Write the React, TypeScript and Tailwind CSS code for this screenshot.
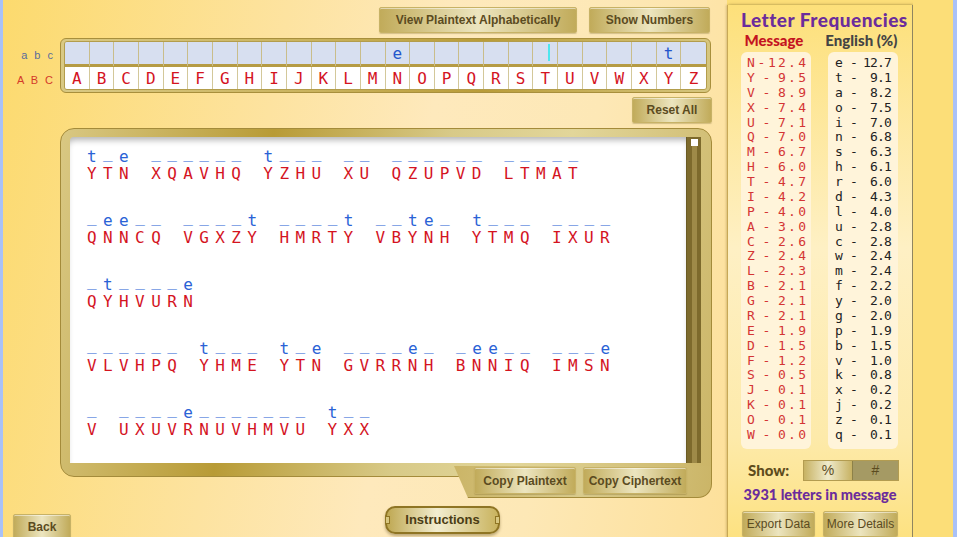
import React from 'react';

const letters = 'ABCDEFGHIJKLMNOPQRSTUVWXYZ'.split('');
const plainMap: Record<string, string> = { N: 'e', Y: 't' };

const lines: [string, string][] = [
  ['t_e ______ t___ __ ______ _____', 'YTN XQAVHQ YZHU XU QZUPVD LTMAT'],
  ['_ee__ ____t ____t __te_ t___ ____', 'QNNCQ VGXZY HMRTY VBYNH YTMQ IXUR'],
  ['_t____e', 'QYHVURN'],
  ['______ t___ t_e ____e_ _ee__ ___e', 'VLVHPQ YHME YTN GVRRNH BNNIQ IMSN'],
  ['_ ____e_______ t__', 'V UXUVRNUVHMVU YXX'],
];

const messageFreq: [string, string][] = [
  ['N', '12.4'], ['Y', '9.5'], ['V', '8.9'], ['X', '7.4'], ['U', '7.1'], ['Q', '7.0'],
  ['M', '6.7'], ['H', '6.0'], ['T', '4.7'], ['I', '4.2'], ['P', '4.0'], ['A', '3.0'],
  ['C', '2.6'], ['Z', '2.4'], ['L', '2.3'], ['B', '2.1'], ['G', '2.1'], ['R', '2.1'],
  ['E', '1.9'], ['D', '1.5'], ['F', '1.2'], ['S', '0.5'], ['J', '0.1'], ['K', '0.1'],
  ['O', '0.1'], ['W', '0.0'],
];

const englishFreq: [string, string][] = [
  ['e', '12.7'], ['t', '9.1'], ['a', '8.2'], ['o', '7.5'], ['i', '7.0'], ['n', '6.8'],
  ['s', '6.3'], ['h', '6.1'], ['r', '6.0'], ['d', '4.3'], ['l', '4.0'], ['u', '2.8'],
  ['c', '2.8'], ['w', '2.4'], ['m', '2.4'], ['f', '2.2'], ['y', '2.0'], ['g', '2.0'],
  ['p', '1.9'], ['b', '1.5'], ['v', '1.0'], ['k', '0.8'], ['x', '0.2'], ['j', '0.2'],
  ['z', '0.1'], ['q', '0.1'],
];

const goldBtn =
  'flex items-center justify-center border border-[#c7b266] rounded-[2px] bg-[linear-gradient(90deg,#c1ab5a_0%,#ece5bf_50%,#c1ab5a_100%)] shadow-[inset_0_1px_0_rgba(255,255,255,0.5),0_1px_1px_rgba(120,100,40,0.3)] text-[#5b4b1f] text-[12px] font-bold font-["Liberation_Sans",Arial,sans-serif]';

const mono = 'font-["DejaVu_Sans_Mono",monospace]';

const AlphabetBar = () => (
  <div className="flex items-start mt-[5px]">
    <div className='w-[57px] pr-[5px] pt-[6px] text-right text-[11px] leading-[22px] font-["Liberation_Sans",Arial,sans-serif]'>
      <div className="text-[#5a6c9c] tracking-[2px]">a b c</div>
      <div className="text-[#d43a2a] tracking-[2px] mt-[3px]">A B C</div>
    </div>
    <div className="w-[651px] h-[55px] rounded-[6px] border border-[#a88f3c] bg-[linear-gradient(90deg,#d9c984_0%,#c9b25c_40%,#b99c38_65%,#d6c67e_100%)] pt-[2px] pb-[4px] pl-[3px] pr-[3px]">
      <div className="rounded-[3px] overflow-hidden border border-[#b39d4c]">
        <div className="grid grid-cols-[repeat(26,1fr)] h-[22px] bg-[#d7dff0]">
          {letters.map((l, i) => (
            <div
              key={l}
              className={`relative flex items-center justify-center text-[16px] text-[#2456cc] ${mono} ${i < 25 ? 'border-r border-[#c9bd8a]' : ''}`}
            >
              {plainMap[l] ?? ''}
              {l === 'T' && <div className="absolute left-[15px] top-[2px] w-[2px] h-[17px] bg-[#4ee6ee]" />}
            </div>
          ))}
        </div>
        <div className="h-[3px] bg-[#b59b44]" />
        <div className="grid grid-cols-[repeat(26,1fr)] h-[22px] bg-white">
          {letters.map((l, i) => (
            <div
              key={l}
              className={`flex items-center justify-center text-[16px] text-[#d4141f] ${mono} ${i < 25 ? 'border-r border-[#d3c89a]' : ''}`}
            >
              {l}
            </div>
          ))}
        </div>
      </div>
    </div>
  </div>
);

const PlainLine = ({ text }: { text: string }) => (
  <div className="text-[#2a62d6]">
    {text.split('').map((c, i) =>
      c === '_' ? (
        <span key={i} className="relative -top-[4px]">_</span>
      ) : (
        <span key={i}>{c}</span>
      ),
    )}
  </div>
);

const MessageFrame = () => (
  <div className="ml-[57px] w-[652px] mt-[5px]">
    <div className="h-[349px] rounded-[14px] rounded-br-none border border-[#a48b3a] bg-[linear-gradient(100deg,#d9c883_0%,#b89b36_30%,#d8ca88_55%,#e2d69a_72%,#cbb567_100%)] pt-[8px] pl-[9px] pr-[10px] pb-[13px] flex">
      <div className="flex-1 bg-white rounded-tl-[4px] shadow-[inset_0_6px_6px_-3px_rgba(0,0,0,0.3)] pt-[11px] pl-[17px]">
        {lines.map(([plain, cipher], i) => (
          <div key={i} className={`${mono} text-[16px] leading-[17px] tracking-[6.4px] whitespace-pre ${i > 0 ? 'mt-[30px]' : ''}`}>
            <PlainLine text={plain} />
            <div className="text-[#d4141f]">{cipher}</div>
          </div>
        ))}
      </div>
      <div className="w-[15px] bg-[#7d6a2c] border-l border-[#6a5a22] flex justify-center pt-[2px]">
        <div className="w-[5px] bg-[#9e8a48] flex flex-col items-center">
          <div className="w-[7px] h-[7px] bg-white" />
        </div>
      </div>
    </div>
    <div className="flex justify-end">
      <div className="-mt-[11px] w-[258px] h-[32px] pl-[20px] pr-[10px] pt-[1px] rounded-br-[14px] border-r border-b border-[#a48b3a] bg-[linear-gradient(100deg,#cbb567_0%,#d9cb8c_50%,#cbb567_100%)] [clip-path:polygon(0_0,100%_0,100%_100%,14px_100%)] flex gap-[7px] items-start">
        <button className={`${goldBtn} w-[102px] h-[27px]`}>Copy Plaintext</button>
        <button className={`${goldBtn} w-[104px] h-[27px]`}>Copy Ciphertext</button>
      </div>
    </div>
  </div>
);

const FreqPanel = () => (
  <div className="w-[186px] h-[540px] mt-[5px] border-l border-[#c8a856] border-r border-r-[#8f8560] shadow-[2px_0_3px_rgba(90,80,40,0.45),-1px_0_2px_rgba(150,120,40,0.3)] bg-[linear-gradient(180deg,#fde07a_0%,#fef0c4_45%,#fdeaaa_80%,#fde17e_100%)] pt-[4px] px-[13px]">
    <div className='text-center text-[19px] leading-[22px] font-black text-[#6b2c9c] tracking-[0.5px] font-["Lato",sans-serif] whitespace-nowrap'>
      Letter Frequencies
    </div>
    <div className='flex gap-[17px] mt-[1px] text-[15px] leading-[16px] font-black font-["Lato",sans-serif]'>
      <div className="w-[70px] text-center text-[#c4141f]">Message</div>
      <div className="w-[80px] text-center text-[#444] whitespace-nowrap">English (%)</div>
    </div>
    <div className={`flex gap-[17px] mt-[4px] ${mono} text-[13px] leading-[14.88px]`}>
      <div className="w-[70px] h-[397px] rounded-[6px] bg-[#fff4da] pt-[4px] pl-[6px] pr-[5px]">
        {messageFreq.map(([l, v]) => (
          <div key={l} className="flex justify-between text-[#d43434]">
            <span>{l}</span>
            <span>-</span>
            <span className="tracking-[2.2px] -mr-[2.2px]">{v}</span>
          </div>
        ))}
      </div>
      <div className="w-[70px] h-[397px] rounded-[6px] bg-[#fff4da] pt-[4px] pl-[7px] pr-[7px]">
        {englishFreq.map(([l, v]) => (
          <div key={l} className="flex text-[#222]">
            <span className="w-[15px]">{l}</span>
            <span>-</span>
            <span className="flex-1 text-right tracking-[-0.8px]">{v}</span>
          </div>
        ))}
      </div>
    </div>
    <div className="flex items-center mt-[11px] h-[21px]">
      <span className='ml-[7px] w-[56px] text-[15px] font-black text-[#5e4c1c] font-["Lato",sans-serif]'>Show:</span>
      <div className="flex h-[21px] border border-[#b39c50]">
        <div className="w-[48px] flex items-center justify-center text-[14px] text-[#5b4b1f] bg-[linear-gradient(90deg,#c7b263_0%,#f0ebcc_50%,#c7b263_100%)] font-['Liberation_Sans',Arial,sans-serif]">%</div>
        <div className="w-[46px] flex items-center justify-center text-[14px] text-[#5b4b1f] bg-[#a59a64] border-l border-[#8d8148] font-['Liberation_Sans',Arial,sans-serif]">#</div>
      </div>
    </div>
    <div className='mt-[6px] text-center text-[14.5px] leading-[16px] font-black text-[#6b2c9c] font-["Lato",sans-serif] whitespace-nowrap'>
      3931 letters in message
    </div>
    <div className="flex gap-[8px] mt-[8px] ml-[1px]">
      <button className={`${goldBtn} w-[73px] h-[26px] !font-normal text-[#5a4a2a]`}>Export Data</button>
      <button className={`${goldBtn} w-[75px] h-[26px] !font-normal text-[#5a4a2a]`}>More Details</button>
    </div>
  </div>
);

export default function App() {
  return (
    <div className="w-[957px] h-[537px] overflow-hidden flex bg-[#fcde78]">
      <div className="w-[3px] h-full bg-[#a9c1f7]" />
      <div className="w-[724px] h-full bg-[linear-gradient(100deg,#fcda6e_0%,#fde3a0_35%,#fee9bc_55%,#fde8b6_75%,#fde09a_100%)]">
        <div className="flex justify-end gap-[12px] pt-[7px] pr-[17px]">
          <button className={`${goldBtn} w-[198px] h-[26px]`}>View Plaintext Alphabetically</button>
          <button className={`${goldBtn} w-[121px] h-[26px]`}>Show Numbers</button>
        </div>
        <AlphabetBar />
        <div className="flex justify-end pr-[15px] mt-[4px]">
          <button className={`${goldBtn} w-[80px] h-[26px]`}>Reset All</button>
        </div>
        <MessageFrame />
        <div className="flex items-start">
          <button className={`${goldBtn} ml-[10px] mt-[16px] w-[58px] h-[26px]`}>Back</button>
          <button className="ml-[314px] mt-[8px] w-[115px] h-[28px] relative rounded-[10px] border-2 border-[#8f7524] bg-[linear-gradient(90deg,#bfa852_0%,#f2edd0_45%,#c9b35e_100%)] shadow-[0_2px_3px_rgba(90,70,20,0.4)] text-[13px] font-bold text-[#4a3c14] font-['Liberation_Sans',Arial,sans-serif]">
            <span className="absolute left-[-2px] top-[8px] w-[5px] h-[8px] border border-[#8f7524] bg-[#d8c780]" />
            Instructions
            <span className="absolute right-[-2px] top-[8px] w-[5px] h-[8px] border border-[#8f7524] bg-[#d8c780]" />
          </button>
        </div>
      </div>
      <FreqPanel />
      <div className="w-[40px] h-full bg-[#fcde78]" />
      <div className="w-[4px] h-full bg-[#a9c1f7]" />
    </div>
  );
}
